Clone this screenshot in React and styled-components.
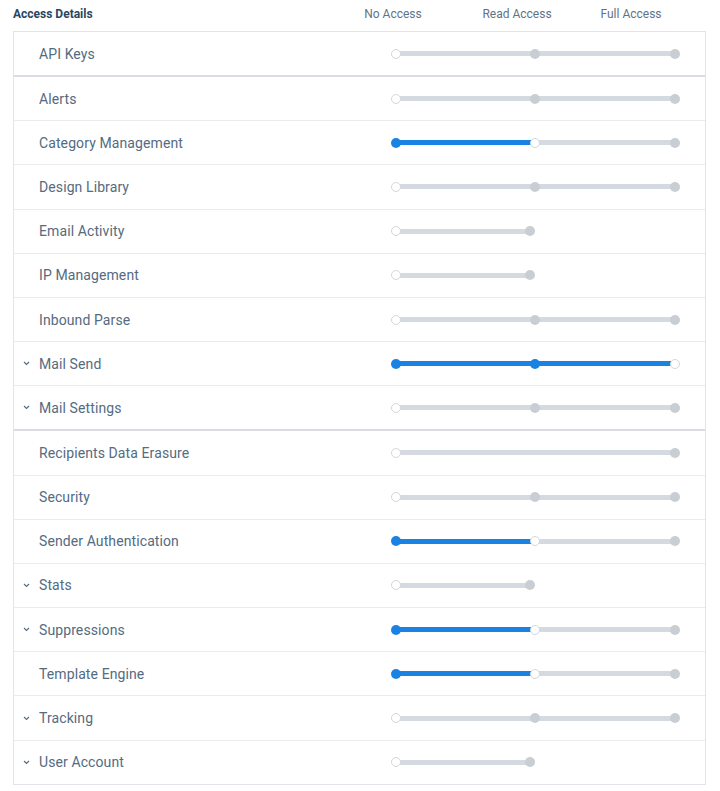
import React from "react";
import styled, { createGlobalStyle } from "styled-components";

const GlobalStyle = createGlobalStyle`
  body {
    margin: 0;
    background: #ffffff;
    font-family: Roboto, "Liberation Sans", sans-serif;
  }
`;

const Page = styled.div`
  padding: 5px 14px 0 13px;
`;

const Header = styled.div`
  display: flex;
  align-items: center;
  height: 17px;
  margin-bottom: 9px;

  .title {
    flex: 1;
    font-size: 12px;
    font-weight: 700;
    color: #294661;
  }
`;

const ColLabel = styled.div`
  width: ${(p) => p.$w}px;
  font-size: 12px;
  color: #5f7387;
  text-align: center;
`;

const HeaderEnd = styled.div`
  width: 42px;
`;

const Table = styled.div`
  border: 1px solid #e1e4e8;
`;

const Row = styled.div`
  display: flex;
  align-items: center;
  height: ${(p) => (p.$strong ? 43 : 43.2)}px;
  border-bottom: ${(p) => (p.$strong ? "2px solid #d9dde2" : "1px solid #e9ecef")};

  &:last-child {
    border-bottom: none;
  }
`;

const Caret = styled.div`
  width: 25px;
  padding-left: 9px;
  box-sizing: border-box;
  display: flex;
  align-items: center;
`;

const Label = styled.div`
  width: 352px;
  font-size: 14px;
  color: #546b81;
  letter-spacing: 0.1px;
`;

const Slider = styled.div`
  display: flex;
  align-items: center;
`;

const Knob = styled.div`
  width: 10px;
  height: 10px;
  border-radius: 50%;
  box-sizing: border-box;
  position: relative;
  z-index: 1;
  background: ${(p) =>
    p.$state === "on" ? "#1a82e2" : p.$state === "current" ? "#ffffff" : "#c9ced5"};
  border: ${(p) => (p.$state === "current" ? "1px solid #d3d8de" : "none")};
`;

const Track = styled.div`
  width: ${(p) => p.$w}px;
  height: 5px;
  margin: 0 -1px;
  background: ${(p) => (p.$on ? "#1a82e2" : "#d5dae0")};
`;

const rows = [
  { name: "API Keys", stops: 3, value: 0, strong: true },
  { name: "Alerts", stops: 3, value: 0 },
  { name: "Category Management", stops: 3, value: 1 },
  { name: "Design Library", stops: 3, value: 0 },
  { name: "Email Activity", stops: 2, value: 0 },
  { name: "IP Management", stops: 2, value: 0 },
  { name: "Inbound Parse", stops: 3, value: 0 },
  { name: "Mail Send", stops: 3, value: 2, caret: true },
  { name: "Mail Settings", stops: 3, value: 0, caret: true, strong: true },
  { name: "Recipients Data Erasure", stops: 2, value: 0, wide: true },
  { name: "Security", stops: 3, value: 0 },
  { name: "Sender Authentication", stops: 3, value: 1 },
  { name: "Stats", stops: 2, value: 0, caret: true },
  { name: "Suppressions", stops: 3, value: 1, caret: true },
  { name: "Template Engine", stops: 3, value: 1 },
  { name: "Tracking", stops: 3, value: 0, caret: true },
  { name: "User Account", stops: 2, value: 0, caret: true },
];

function AccessSlider({ stops, value, wide }) {
  const widths = stops === 3 ? [131, 132] : [wide ? 271 : 126];
  const parts = [];
  for (let i = 0; i < stops; i++) {
    const state = i < value ? "on" : i === value ? "current" : "off";
    parts.push(<Knob key={`k${i}`} $state={state} />);
    if (i < stops - 1) {
      parts.push(<Track key={`t${i}`} $w={widths[i]} $on={i < value} />);
    }
  }
  return <Slider>{parts}</Slider>;
}

function Chevron() {
  return (
    <svg width="7" height="5" viewBox="0 0 7 5">
      <polyline points="1,1 3.5,3.5 6,1" fill="none" stroke="#546b81" strokeWidth="1.1" />
    </svg>
  );
}

export default function App() {
  return (
    <Page>
      <GlobalStyle />
      <Header>
        <div className="title">Access Details</div>
        <ColLabel $w={86}>No Access</ColLabel>
        <ColLabel $w={162}>Read Access</ColLabel>
        <ColLabel $w={66}>Full Access</ColLabel>
        <HeaderEnd />
      </Header>
      <Table>
        {rows.map((r) => (
          <Row key={r.name} $strong={r.strong}>
            <Caret>{r.caret && <Chevron />}</Caret>
            <Label>{r.name}</Label>
            <AccessSlider stops={r.stops} value={r.value} wide={r.wide} />
          </Row>
        ))}
      </Table>
    </Page>
  );
}
